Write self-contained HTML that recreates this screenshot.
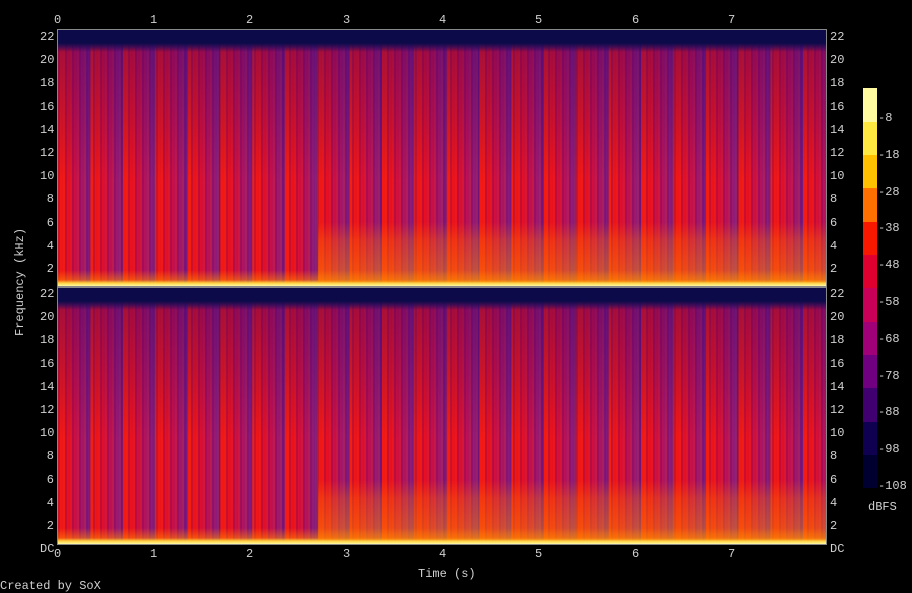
<!DOCTYPE html>
<html><head><meta charset="utf-8"><style>
body{margin:0;background:#000;width:912px;height:593px;overflow:hidden;position:relative;font-family:"Liberation Mono","DejaVu Sans Mono",monospace;font-size:12px;color:#d0d0d0}
.t{position:absolute;line-height:12px;white-space:nowrap}
.p{position:absolute;left:58px;width:768px;height:256px;
background:
linear-gradient(to bottom,#0c0a48 0,#0c0a48 13px,rgba(40,10,90,.85) 17px,rgba(60,0,110,.4) 22px,rgba(60,0,110,.2) 90px,rgba(0,0,0,0) 150px,rgba(0,0,0,0) 100%),
linear-gradient(to bottom,rgba(0,0,0,0) 0,rgba(0,0,0,0) 240px,rgba(255,140,0,.5) 250px,#ffd040 253px,#fff8a0 256px),
repeating-linear-gradient(to right,rgba(90,0,110,.25) 0,rgba(90,0,110,.25) 2px,rgba(0,0,0,0) 2px,rgba(0,0,0,0) 5px,rgba(255,60,0,.15) 5px,rgba(255,60,0,.15) 7px),
repeating-linear-gradient(to right,#f41c10 0,#e81020 30%,#c01050 60%,#901c78 88%,#721a80 100%) 0 0/32.4px 100%;}
.o{position:absolute;left:318px;width:508px;height:60px;background:linear-gradient(to bottom,rgba(255,120,0,0) 0,rgba(255,120,0,.3) 30%,rgba(255,150,0,.45) 90%,rgba(255,150,0,.45) 100%)}
.cb{position:absolute;left:863px;width:14px}
.ln{position:absolute;background:#888}
</style></head><body>
<div class="ln" style="left:57px;top:29px;width:770px;height:1px"></div>
<div class="ln" style="left:57px;top:29px;width:1px;height:516px"></div>
<div class="ln" style="left:826px;top:29px;width:1px;height:516px"></div>
<div class="ln" style="left:57px;top:286px;width:770px;height:2px"></div>
<div class="ln" style="left:57px;top:544px;width:770px;height:1px"></div>
<div class="p" style="top:30px"></div>
<div class="p" style="top:288px"></div>
<div class="o" style="top:222px"></div>
<div class="o" style="top:480px"></div>

<div class="t" style="left:54px;top:14px">0</div><div class="t" style="left:150px;top:14px">1</div><div class="t" style="left:246px;top:14px">2</div><div class="t" style="left:343px;top:14px">3</div><div class="t" style="left:439px;top:14px">4</div><div class="t" style="left:535px;top:14px">5</div><div class="t" style="left:632px;top:14px">6</div><div class="t" style="left:728px;top:14px">7</div>
<div class="t" style="left:54px;top:548px">0</div><div class="t" style="left:150px;top:548px">1</div><div class="t" style="left:246px;top:548px">2</div><div class="t" style="left:343px;top:548px">3</div><div class="t" style="left:439px;top:548px">4</div><div class="t" style="left:535px;top:548px">5</div><div class="t" style="left:632px;top:548px">6</div><div class="t" style="left:728px;top:548px">7</div>

<div class="t" style="left:40px;top:26px;width:14px;text-align:right;line-height:23.2px">22<br>20<br>18<br>16<br>14<br>12<br>10<br>8<br>6<br>4<br>2</div>
<div class="t" style="left:40px;top:283px;width:14px;text-align:right;line-height:23.2px">22<br>20<br>18<br>16<br>14<br>12<br>10<br>8<br>6<br>4<br>2<br>DC</div>
<div class="t" style="left:830px;top:26px;line-height:23.2px">22<br>20<br>18<br>16<br>14<br>12<br>10<br>8<br>6<br>4<br>2</div>
<div class="t" style="left:830px;top:283px;line-height:23.2px">22<br>20<br>18<br>16<br>14<br>12<br>10<br>8<br>6<br>4<br>2<br>DC</div>
<div class="t" style="left:-30px;top:280px;transform:rotate(-90deg);width:100px;text-align:center">Frequency (kHz)</div>
<div class="t" style="left:418px;top:568px">Time (s)</div>
<div class="t" style="left:0;top:580px">Created by SoX</div>

<div class="cb" style="top:88px;height:34px;background:#fffaa0"></div>
<div class="cb" style="top:122px;height:33px;background:#ffe840"></div>
<div class="cb" style="top:155px;height:33px;background:#ffc000"></div>
<div class="cb" style="top:188px;height:34px;background:#ff7000"></div>
<div class="cb" style="top:222px;height:33px;background:#f81800"></div>
<div class="cb" style="top:255px;height:33px;background:#e00030"></div>
<div class="cb" style="top:288px;height:34px;background:#c80058"></div>
<div class="cb" style="top:322px;height:33px;background:#a00078"></div>
<div class="cb" style="top:355px;height:33px;background:#700080"></div>
<div class="cb" style="top:388px;height:34px;background:#400070"></div>
<div class="cb" style="top:422px;height:33px;background:#100050"></div>
<div class="cb" style="top:455px;height:33px;background:#000030"></div>
<div class="t" style="left:878px;top:100px;line-height:36.8px">-8<br>-18<br>-28<br>-38<br>-48<br>-58<br>-68<br>-78<br>-88<br>-98<br>-108</div>
<div class="t" style="left:868px;top:501px">dBFS</div>
</body></html>
